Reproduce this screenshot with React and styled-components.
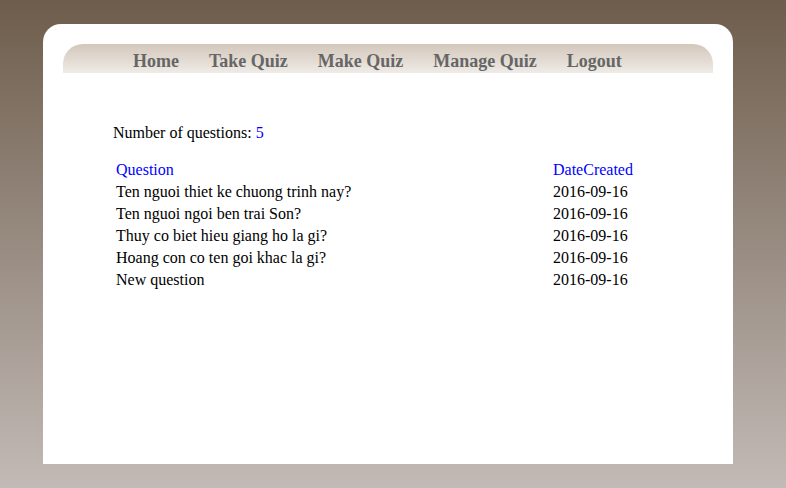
import styled, { createGlobalStyle } from 'styled-components';

const GlobalStyle = createGlobalStyle`
  html, body {
    margin: 0;
    padding: 0;
  }
  body {
    min-height: 488px;
    background: linear-gradient(to bottom, #6e5d4c 0%, #c2bab6 100%);
    font-family: "Liberation Serif", "Times New Roman", serif;
  }
`;

const Page = styled.div`
  padding: 24px 53px 0 43px;
  height: 488px;
  box-sizing: border-box;
`;

const Container = styled.div`
  width: 690px;
  height: 440px;
  background: #fff;
  border-radius: 18px 18px 0 0;
  padding: 20px 20px 0;
  box-sizing: border-box;
`;

const Nav = styled.ul`
  list-style: none;
  margin: 0;
  padding: 5px 0 0 55px;
  height: 29px;
  box-sizing: border-box;
  display: flex;
  border-radius: 20px 20px 0 0;
  background: linear-gradient(to bottom, #d3c7bb 0%, #efebe6 100%);
`;

const NavItem = styled.li`
  padding: 0 15px;
  line-height: 24px;
  font-size: 18px;
  font-weight: bold;
  color: #666;
  white-space: nowrap;
`;

const Content = styled.div`
  padding: 51px 0 0 50px;
  font-size: 16px;
  color: #000;
`;

const Count = styled.p`
  margin: 0 0 16px;
  line-height: 18px;
`;

const Blue = styled.span`
  color: #0000ff;
`;

const Table = styled.table`
  border-spacing: 2px;
  font-size: 16px;
`;

const Cell = styled.td`
  padding: 1px;
  line-height: 18px;
  text-align: left;
  font-weight: normal;
  color: ${p => (p.$head ? '#0000ff' : '#000')};
  width: ${p => (p.$wide ? '433px' : 'auto')};
`;

const questions = [
  'Ten nguoi thiet ke chuong trinh nay?',
  'Ten nguoi ngoi ben trai Son?',
  'Thuy co biet hieu giang ho la gi?',
  'Hoang con co ten goi khac la gi?',
  'New question',
];

const App = () => {
  return (
    <Page>
      <GlobalStyle />
      <Container>
        <Nav>
          {['Home', 'Take Quiz', 'Make Quiz', 'Manage Quiz', 'Logout'].map(item => (
            <NavItem key={item}>{item}</NavItem>
          ))}
        </Nav>
        <Content>
          <Count>
            Number of questions: <Blue>5</Blue>
          </Count>
          <Table>
            <thead>
              <tr>
                <Cell as="th" $head $wide>Question</Cell>
                <Cell as="th" $head>DateCreated</Cell>
              </tr>
            </thead>
            <tbody>
              {questions.map(q => (
                <tr key={q}>
                  <Cell>{q}</Cell>
                  <Cell>2016-09-16</Cell>
                </tr>
              ))}
            </tbody>
          </Table>
        </Content>
      </Container>
    </Page>
  );
};

export default App;
